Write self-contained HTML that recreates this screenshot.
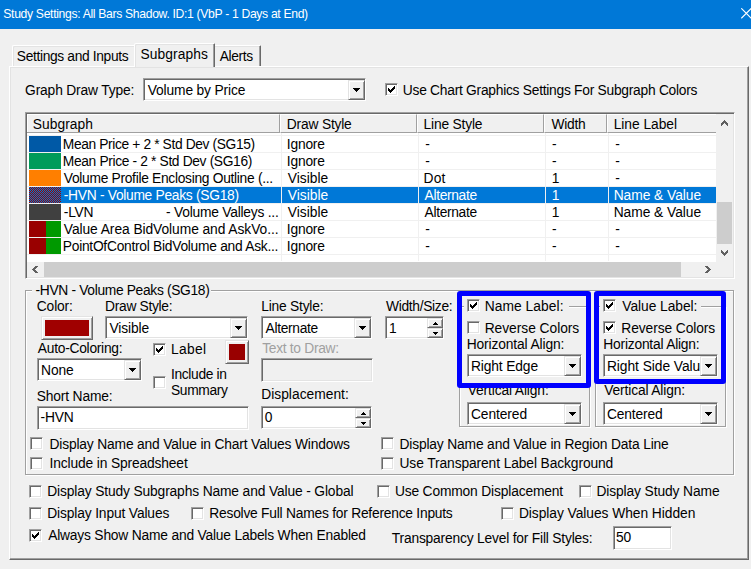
<!DOCTYPE html><html><head><meta charset="utf-8"><style>
html,body{margin:0;padding:0;}
body{width:751px;height:569px;position:relative;overflow:hidden;background:#F0F0F0;font-family:"Liberation Sans",sans-serif;}
.t{position:absolute;white-space:pre;font-size:13.8px;line-height:15px;color:#000;}
.sk{position:absolute;box-sizing:border-box;border:1px solid;border-color:#A0A0A0 #FFFFFF #FFFFFF #A0A0A0;box-shadow:inset 1px 1px 0 #696969, inset -1px -1px 0 #E3E3E3;}
.rs{position:absolute;box-sizing:border-box;border:1px solid;border-color:#E3E3E3 #696969 #696969 #E3E3E3;box-shadow:inset 1px 1px 0 #FFFFFF, inset -1px -1px 0 #A0A0A0;}
.et{position:absolute;box-sizing:border-box;border:1px solid;border-color:#A0A0A0 #FFFFFF #FFFFFF #A0A0A0;box-shadow:inset 1px 1px 0 #FFFFFF, inset -1px -1px 0 #A0A0A0;}
</style></head><body>

<div style="position:absolute;left:0px;top:0px;width:751px;height:29px;background:#0078D7;"></div>
<div class="t" style="left:3.30px;top:7.27px;letter-spacing:-0.334px;color:#fff;font-size:12.2px;">Study Settings: All Bars Shadow. ID:1 (VbP - 1 Days at End)</div>
<svg style="position:absolute;left:741px;top:8px" width="11" height="11"><path d="M0.3 0.3L10.3 10.3M10.3 0.3L0.3 10.3" stroke="#fff" stroke-width="1.1"/></svg>
<div style="position:absolute;left:9px;top:66px;width:740px;height:494px;box-sizing:border-box;border:1px solid;border-color:#FFFFFF #696969 #696969 #FFFFFF;box-shadow:inset -1px -1px 0 #A0A0A0, inset 1px 1px 0 #E3E3E3"></div>
<div style="position:absolute;left:12px;top:45px;width:122px;height:21px;box-sizing:border-box;border:1px solid;border-bottom:none;border-right:none;border-color:#FFFFFF transparent transparent #FFFFFF;border-top-left-radius:2px;box-shadow:inset 1px 1px 0 #E3E3E3"></div>
<div class="t" style="left:16.80px;top:48.72px;letter-spacing:-0.350px;">Settings and Inputs</div>
<div style="position:absolute;left:134px;top:43px;width:81px;height:24px;background:#F0F0F0;box-sizing:border-box;border:1px solid;border-bottom:none;border-color:#FFFFFF #696969 transparent #FFFFFF;box-shadow:inset -1px 0 0 #A0A0A0, inset 1px 1px 0 #E3E3E3;border-top-left-radius:2px;border-top-right-radius:1px"></div>
<div class="t" style="left:140.50px;top:46.72px;letter-spacing:0.075px;">Subgraphs</div>
<div style="position:absolute;left:215px;top:45px;width:46px;height:21px;box-sizing:border-box;border:1px solid;border-bottom:none;border-left:none;border-color:#FFFFFF #696969 transparent transparent;box-shadow:inset -1px 0 0 #A0A0A0, inset 0 1px 0 #E3E3E3;border-top-right-radius:1px"></div>
<div class="t" style="left:219.70px;top:48.72px;letter-spacing:-0.340px;">Alerts</div>
<div class="t" style="left:25.10px;top:82.72px;letter-spacing:-0.160px;">Graph Draw Type:</div>
<div class="sk" style="left:143px;top:78px;width:223px;height:23px;background:#fff"></div>
<div class="rs" style="left:348px;top:80px;width:17px;height:20px;background:#F0F0F0"></div>
<svg style="position:absolute;left:353px;top:88px" width="7" height="4" shape-rendering="crispEdges"><path fill="#000" d="M0 0h7v1h-1v1h-1v1h-1v1h-1v-1h-1v-1h-1v-1h-1z"/></svg>
<div class="t" style="left:147.80px;top:82.72px;letter-spacing:-0.150px;">Volume by Price</div>
<div class="sk" style="left:385px;top:83px;width:13px;height:13px;background:#fff"></div>
<svg style="position:absolute;left:388px;top:86px" width="7" height="7" shape-rendering="crispEdges"><path fill="#000" d="M6 0h1v3h-1v1h-1v1h-1v1h-1v1h-1v-1h-1v-1h-1v-3h1v1h1v1h1v-1h1v-1h1v-1h1z"/></svg>
<div class="t" style="left:402.80px;top:82.72px;letter-spacing:-0.263px;">Use Chart Graphics Settings For Subgraph Colors</div>
<div class="sk" style="left:25px;top:112px;width:710px;height:167px;background:#fff"></div>
<div style="position:absolute;left:27px;top:114px;width:253px;height:19px;box-sizing:border-box;background:#F0F0F0;border-left:1px solid #fff;border-right:1px solid #A0A0A0;border-bottom:1px solid #A0A0A0;border-top:1px solid #fff"></div>
<div class="t" style="left:32.80px;top:116.72px;letter-spacing:0.043px;">Subgraph</div>
<div style="position:absolute;left:280px;top:114px;width:137px;height:19px;box-sizing:border-box;background:#F0F0F0;border-left:1px solid #fff;border-right:1px solid #A0A0A0;border-bottom:1px solid #A0A0A0;border-top:1px solid #fff"></div>
<div class="t" style="left:286.80px;top:116.72px;letter-spacing:-0.189px;">Draw Style</div>
<div style="position:absolute;left:417px;top:114px;width:127px;height:19px;box-sizing:border-box;background:#F0F0F0;border-left:1px solid #fff;border-right:1px solid #A0A0A0;border-bottom:1px solid #A0A0A0;border-top:1px solid #fff"></div>
<div class="t" style="left:423.60px;top:116.72px;letter-spacing:-0.189px;">Line Style</div>
<div style="position:absolute;left:544px;top:114px;width:63px;height:19px;box-sizing:border-box;background:#F0F0F0;border-left:1px solid #fff;border-right:1px solid #A0A0A0;border-bottom:1px solid #A0A0A0;border-top:1px solid #fff"></div>
<div class="t" style="left:551.40px;top:116.72px;letter-spacing:-0.250px;">Width</div>
<div style="position:absolute;left:607px;top:114px;width:109px;height:19px;box-sizing:border-box;background:#F0F0F0;border-left:1px solid #fff;border-bottom:1px solid #A0A0A0;border-top:1px solid #fff"></div>
<div class="t" style="left:613.70px;top:116.72px;letter-spacing:-0.044px;">Line Label</div>
<div style="position:absolute;left:27px;top:132px;width:1px;height:1px;background:#A0A0A0;"></div>
<div style="position:absolute;left:27px;top:133px;width:689px;height:129px;background:#fff;"></div>
<div style="position:absolute;left:27px;top:135px;width:689px;height:1px;background:#F0F0F0;"></div>
<div style="position:absolute;left:27px;top:152px;width:689px;height:1px;background:#F0F0F0;"></div>
<div style="position:absolute;left:29px;top:136px;width:32px;height:16px;background:#0059A6;"></div>
<div class="t" style="left:62.80px;top:136.72px;letter-spacing:-0.377px;">Mean Price + 2 * Std Dev (SG15)</div>
<div class="t" style="left:286.80px;top:136.72px;letter-spacing:-0.200px;">Ignore</div>
<div class="t" style="left:425.30px;top:136.72px;letter-spacing:0.000px;">-</div>
<div class="t" style="left:551.90px;top:136.72px;letter-spacing:0.000px;">-</div>
<div class="t" style="left:615.30px;top:136.72px;letter-spacing:0.000px;">-</div>
<div style="position:absolute;left:27px;top:169px;width:689px;height:1px;background:#F0F0F0;"></div>
<div style="position:absolute;left:29px;top:153px;width:32px;height:16px;background:#009B5A;"></div>
<div class="t" style="left:62.80px;top:153.72px;letter-spacing:-0.353px;">Mean Price - 2 * Std Dev (SG16)</div>
<div class="t" style="left:286.80px;top:153.72px;letter-spacing:-0.200px;">Ignore</div>
<div class="t" style="left:425.30px;top:153.72px;letter-spacing:0.000px;">-</div>
<div class="t" style="left:551.90px;top:153.72px;letter-spacing:0.000px;">-</div>
<div class="t" style="left:615.30px;top:153.72px;letter-spacing:0.000px;">-</div>
<div style="position:absolute;left:27px;top:186px;width:689px;height:1px;background:#F0F0F0;"></div>
<div style="position:absolute;left:29px;top:170px;width:32px;height:16px;background:#FF7F00;"></div>
<div class="t" style="left:63.80px;top:170.72px;letter-spacing:-0.300px;">Volume Profile Enclosing Outline (...</div>
<div class="t" style="left:287.80px;top:170.72px;letter-spacing:0.000px;">Visible</div>
<div class="t" style="left:423.60px;top:170.72px;letter-spacing:0.150px;">Dot</div>
<div class="t" style="left:551.80px;top:170.72px;letter-spacing:0.000px;">1</div>
<div class="t" style="left:615.30px;top:170.72px;letter-spacing:0.000px;">-</div>
<div style="position:absolute;left:61px;top:187px;width:655px;height:16px;background:#0078D7;"></div>
<div style="position:absolute;left:27px;top:203px;width:689px;height:1px;background:#F0F0F0;"></div>
<div style="position:absolute;left:29px;top:187px;width:32px;height:16px;background:#990000;background-image:repeating-conic-gradient(#990000 0 25%,#0078D7 0 50%);background-size:2px 2px;"></div>
<div class="t" style="left:63.80px;top:187.72px;letter-spacing:-0.292px;color:#fff;">-HVN - Volume Peaks (SG18)</div>
<div class="t" style="left:287.80px;top:187.72px;letter-spacing:0.000px;color:#fff;">Visible</div>
<div class="t" style="left:424.60px;top:187.72px;letter-spacing:-0.338px;color:#fff;">Alternate</div>
<div class="t" style="left:551.80px;top:187.72px;letter-spacing:0.000px;color:#fff;">1</div>
<div class="t" style="left:613.70px;top:187.72px;letter-spacing:-0.045px;color:#fff;">Name &amp; Value</div>
<div style="position:absolute;left:27px;top:220px;width:689px;height:1px;background:#F0F0F0;"></div>
<div style="position:absolute;left:29px;top:204px;width:32px;height:16px;background:#404040;"></div>
<div class="t" style="left:63.80px;top:204.72px;letter-spacing:-0.233px;">-LVN</div>
<div class="t" style="left:166.00px;top:204.72px;letter-spacing:-0.226px;">- Volume Valleys ...</div>
<div class="t" style="left:287.80px;top:204.72px;letter-spacing:0.000px;">Visible</div>
<div class="t" style="left:424.60px;top:204.72px;letter-spacing:-0.338px;">Alternate</div>
<div class="t" style="left:551.80px;top:204.72px;letter-spacing:0.000px;">1</div>
<div class="t" style="left:613.70px;top:204.72px;letter-spacing:-0.045px;">Name &amp; Value</div>
<div style="position:absolute;left:27px;top:237px;width:689px;height:1px;background:#F0F0F0;"></div>
<div style="position:absolute;left:29px;top:221px;width:17px;height:16px;background:#990000;"></div>
<div style="position:absolute;left:46px;top:221px;width:15px;height:16px;background:#009900;"></div>
<div class="t" style="left:63.80px;top:221.72px;letter-spacing:-0.066px;">Value Area BidVolume and AskVo...</div>
<div class="t" style="left:286.80px;top:221.72px;letter-spacing:-0.200px;">Ignore</div>
<div class="t" style="left:425.30px;top:221.72px;letter-spacing:0.000px;">-</div>
<div class="t" style="left:551.90px;top:221.72px;letter-spacing:0.000px;">-</div>
<div class="t" style="left:615.30px;top:221.72px;letter-spacing:0.000px;">-</div>
<div style="position:absolute;left:27px;top:254px;width:689px;height:1px;background:#F0F0F0;"></div>
<div style="position:absolute;left:29px;top:238px;width:17px;height:16px;background:#990000;"></div>
<div style="position:absolute;left:46px;top:238px;width:15px;height:16px;background:#009900;"></div>
<div class="t" style="left:62.80px;top:238.72px;letter-spacing:-0.268px;">PointOfControl BidVolume and Ask...</div>
<div class="t" style="left:286.80px;top:238.72px;letter-spacing:-0.200px;">Ignore</div>
<div class="t" style="left:425.30px;top:238.72px;letter-spacing:0.000px;">-</div>
<div class="t" style="left:551.90px;top:238.72px;letter-spacing:0.000px;">-</div>
<div class="t" style="left:615.30px;top:238.72px;letter-spacing:0.000px;">-</div>
<div style="position:absolute;left:281px;top:133px;width:1px;height:128px;background:#F0F0F0;"></div>
<div style="position:absolute;left:418px;top:133px;width:1px;height:128px;background:#F0F0F0;"></div>
<div style="position:absolute;left:545px;top:133px;width:1px;height:128px;background:#F0F0F0;"></div>
<div style="position:absolute;left:608px;top:133px;width:1px;height:128px;background:#F0F0F0;"></div>
<div style="position:absolute;left:716px;top:114px;width:17px;height:148px;background:#F0F0F0;"></div>
<div style="position:absolute;left:717px;top:202px;width:15px;height:42px;background:#CDCDCD;"></div>
<svg style="position:absolute;left:721px;top:120px" width="7" height="6" shape-rendering="crispEdges"><path fill="#606060" d="M3 0h1v1h-1zM2 1h3v1h-3zM1 2h5v1h-5zM0 3h3v1h-3zM4 3h3v1h-3zM0 4h2v1h-2zM5 4h2v1h-2zM0 5h1v1h-1zM6 5h1v1h-1z"/></svg>
<svg style="position:absolute;left:721px;top:250px" width="7" height="6" shape-rendering="crispEdges"><path fill="#606060" d="M0 0h1v1h-1zM6 0h1v1h-1zM0 1h2v1h-2zM5 1h2v1h-2zM0 2h3v1h-3zM4 2h3v1h-3zM1 3h5v1h-5zM2 4h3v1h-3zM3 5h1v1h-1z"/></svg>
<div style="position:absolute;left:27px;top:262px;width:706px;height:15px;background:#F0F0F0;"></div>
<div style="position:absolute;left:44px;top:262px;width:637px;height:15px;background:#CDCDCD;"></div>
<svg style="position:absolute;left:32px;top:266px" width="6" height="7" shape-rendering="crispEdges"><path fill="#606060" d="M3 0h3v1h-3zM2 1h3v1h-3zM1 2h3v1h-3zM0 3h3v1h-3zM1 4h3v1h-3zM2 5h3v1h-3zM3 6h3v1h-3z"/></svg>
<svg style="position:absolute;left:705px;top:266px" width="6" height="7" shape-rendering="crispEdges"><path fill="#606060" d="M0 0h3v1h-3zM1 1h3v1h-3zM2 2h3v1h-3zM3 3h3v1h-3zM2 4h3v1h-3zM1 5h3v1h-3zM0 6h3v1h-3z"/></svg>
<div style="position:absolute;box-sizing:border-box;border:1px solid #FFFFFF;left:26px;top:291px;width:709px;height:185px"></div>
<div style="position:absolute;box-sizing:border-box;border:1px solid #A0A0A0;left:25px;top:290px;width:709px;height:185px"></div>
<div style="position:absolute;left:32px;top:282px;width:179px;height:16px;background:#F0F0F0;"></div>
<div class="t" style="left:35.50px;top:282.72px;letter-spacing:-0.328px;">-HVN - Volume Peaks (SG18)</div>
<div class="t" style="left:36.80px;top:298.72px;letter-spacing:-0.140px;">Color:</div>
<div class="rs" style="left:41px;top:316px;width:52px;height:24px;background:#F0F0F0"></div>
<div style="position:absolute;left:45px;top:320px;width:44px;height:16px;background:#A00000;"></div>
<div class="t" style="left:105.10px;top:298.72px;letter-spacing:-0.310px;">Draw Style:</div>
<div class="sk" style="left:105px;top:316px;width:143px;height:23px;background:#fff"></div>
<div class="rs" style="left:230px;top:318px;width:17px;height:20px;background:#F0F0F0"></div>
<svg style="position:absolute;left:235px;top:326px" width="7" height="4" shape-rendering="crispEdges"><path fill="#000" d="M0 0h7v1h-1v1h-1v1h-1v1h-1v-1h-1v-1h-1v-1h-1z"/></svg>
<div class="t" style="left:109.50px;top:320.72px;letter-spacing:-0.117px;">Visible</div>
<div class="t" style="left:261.20px;top:298.72px;letter-spacing:-0.210px;">Line Style:</div>
<div class="sk" style="left:261px;top:316px;width:111px;height:23px;background:#fff"></div>
<div class="rs" style="left:354px;top:318px;width:17px;height:20px;background:#F0F0F0"></div>
<svg style="position:absolute;left:359px;top:326px" width="7" height="4" shape-rendering="crispEdges"><path fill="#000" d="M0 0h7v1h-1v1h-1v1h-1v1h-1v-1h-1v-1h-1v-1h-1z"/></svg>
<div class="t" style="left:265.50px;top:320.72px;letter-spacing:-0.312px;">Alternate</div>
<div class="t" style="left:386.00px;top:298.72px;letter-spacing:-0.320px;">Width/Size:</div>
<div class="sk" style="left:385px;top:316px;width:59px;height:23px;background:#fff"></div>
<div class="rs" style="left:427px;top:318px;width:16px;height:10px;background:#F0F0F0"></div>
<div class="rs" style="left:427px;top:328px;width:16px;height:10px;background:#F0F0F0"></div>
<svg style="position:absolute;left:433px;top:322px" width="5" height="3" shape-rendering="crispEdges"><path fill="#000" d="M2 0h1v1h1v1h1v1h-5v-1h1v-1h1z"/></svg>
<svg style="position:absolute;left:433px;top:332px" width="5" height="3" shape-rendering="crispEdges"><path fill="#000" d="M0 0h5v1h-1v1h-1v1h-1v-1h-1v-1h-1z"/></svg>
<div class="t" style="left:389.00px;top:320.72px;letter-spacing:0.000px;">1</div>
<div class="t" style="left:37.80px;top:340.72px;letter-spacing:-0.262px;">Auto-Coloring:</div>
<div class="sk" style="left:37px;top:358px;width:105px;height:23px;background:#fff"></div>
<div class="rs" style="left:124px;top:360px;width:17px;height:20px;background:#F0F0F0"></div>
<svg style="position:absolute;left:129px;top:368px" width="7" height="4" shape-rendering="crispEdges"><path fill="#000" d="M0 0h7v1h-1v1h-1v1h-1v1h-1v-1h-1v-1h-1v-1h-1z"/></svg>
<div class="t" style="left:41.10px;top:362.72px;letter-spacing:-0.100px;">None</div>
<div class="sk" style="left:153px;top:343px;width:13px;height:13px;background:#fff"></div>
<svg style="position:absolute;left:156px;top:346px" width="7" height="7" shape-rendering="crispEdges"><path fill="#000" d="M6 0h1v3h-1v1h-1v1h-1v1h-1v1h-1v-1h-1v-1h-1v-3h1v1h1v1h1v-1h1v-1h1v-1h1z"/></svg>
<div class="t" style="left:171.00px;top:341.72px;letter-spacing:0.325px;">Label</div>
<div class="rs" style="left:225px;top:340px;width:24px;height:24px;background:#F0F0F0"></div>
<div style="position:absolute;left:229px;top:344px;width:16px;height:16px;background:#990000;"></div>
<div class="sk" style="left:153px;top:376px;width:13px;height:13px;background:#fff"></div>
<div class="t" style="left:171.00px;top:366.72px;letter-spacing:-0.344px;">Include in</div>
<div class="t" style="left:171.00px;top:382.72px;letter-spacing:-0.350px;">Summary</div>
<div class="t" style="left:262.20px;top:340.72px;letter-spacing:-0.300px;color:#A0A0A0;">Text to Draw:</div>
<div class="sk" style="left:261px;top:358px;width:112px;height:24px;background:#F0F0F0"></div>
<div class="t" style="left:36.80px;top:388.72px;letter-spacing:-0.170px;">Short Name:</div>
<div class="sk" style="left:37px;top:406px;width:212px;height:24px;background:#fff"></div>
<div class="t" style="left:40.50px;top:409.72px;letter-spacing:-0.133px;">-HVN</div>
<div class="t" style="left:261.20px;top:386.72px;letter-spacing:0.017px;">Displacement:</div>
<div class="sk" style="left:261px;top:406px;width:111px;height:23px;background:#fff"></div>
<div class="rs" style="left:355px;top:408px;width:16px;height:10px;background:#F0F0F0"></div>
<div class="rs" style="left:355px;top:418px;width:16px;height:10px;background:#F0F0F0"></div>
<svg style="position:absolute;left:361px;top:412px" width="5" height="3" shape-rendering="crispEdges"><path fill="#000" d="M2 0h1v1h1v1h1v1h-5v-1h1v-1h1z"/></svg>
<svg style="position:absolute;left:361px;top:422px" width="5" height="3" shape-rendering="crispEdges"><path fill="#000" d="M0 0h5v1h-1v1h-1v1h-1v-1h-1v-1h-1z"/></svg>
<div class="t" style="left:264.80px;top:409.72px;letter-spacing:0.000px;">0</div>
<div style="position:absolute;box-sizing:border-box;border:1px solid #FFFFFF;left:460px;top:307px;width:131px;height:121px"></div>
<div style="position:absolute;box-sizing:border-box;border:1px solid #A0A0A0;left:459px;top:306px;width:131px;height:121px"></div>
<div style="position:absolute;left:464px;top:298px;width:105px;height:16px;background:#F0F0F0;"></div>
<div class="sk" style="left:467px;top:299px;width:13px;height:13px;background:#fff"></div>
<svg style="position:absolute;left:470px;top:302px" width="7" height="7" shape-rendering="crispEdges"><path fill="#000" d="M6 0h1v3h-1v1h-1v1h-1v1h-1v1h-1v-1h-1v-1h-1v-3h1v1h1v1h1v-1h1v-1h1v-1h1z"/></svg>
<div class="t" style="left:484.70px;top:298.72px;letter-spacing:0.060px;">Name Label:</div>
<div class="sk" style="left:467px;top:321px;width:13px;height:13px;background:#fff"></div>
<div class="t" style="left:484.70px;top:320.72px;letter-spacing:-0.038px;">Reverse Colors</div>
<div class="t" style="left:466.70px;top:336.72px;letter-spacing:-0.125px;">Horizontal Align:</div>
<div class="sk" style="left:467px;top:354px;width:115px;height:23px;background:#fff"></div>
<div class="rs" style="left:564px;top:356px;width:17px;height:20px;background:#F0F0F0"></div>
<svg style="position:absolute;left:569px;top:364px" width="7" height="4" shape-rendering="crispEdges"><path fill="#000" d="M0 0h7v1h-1v1h-1v1h-1v1h-1v-1h-1v-1h-1v-1h-1z"/></svg>
<div class="t" style="left:471.00px;top:358.72px;letter-spacing:-0.133px;">Right Edge</div>
<div class="t" style="left:467.70px;top:382.72px;letter-spacing:-0.129px;">Vertical Align:</div>
<div class="sk" style="left:467px;top:402px;width:115px;height:23px;background:#fff"></div>
<div class="rs" style="left:564px;top:404px;width:17px;height:20px;background:#F0F0F0"></div>
<svg style="position:absolute;left:569px;top:412px" width="7" height="4" shape-rendering="crispEdges"><path fill="#000" d="M0 0h7v1h-1v1h-1v1h-1v1h-1v-1h-1v-1h-1v-1h-1z"/></svg>
<div class="t" style="left:471.00px;top:406.72px;letter-spacing:-0.100px;">Centered</div>
<div style="position:absolute;box-sizing:border-box;border:1px solid #FFFFFF;left:596px;top:307px;width:131px;height:121px"></div>
<div style="position:absolute;box-sizing:border-box;border:1px solid #A0A0A0;left:595px;top:306px;width:131px;height:121px"></div>
<div style="position:absolute;left:600px;top:298px;width:101px;height:16px;background:#F0F0F0;"></div>
<div class="sk" style="left:603px;top:299px;width:13px;height:13px;background:#fff"></div>
<svg style="position:absolute;left:606px;top:302px" width="7" height="7" shape-rendering="crispEdges"><path fill="#000" d="M6 0h1v3h-1v1h-1v1h-1v1h-1v1h-1v-1h-1v-1h-1v-3h1v1h1v1h1v-1h1v-1h1v-1h1z"/></svg>
<div class="t" style="left:622.30px;top:298.72px;letter-spacing:-0.055px;">Value Label:</div>
<div class="sk" style="left:603px;top:321px;width:13px;height:13px;background:#fff"></div>
<svg style="position:absolute;left:606px;top:324px" width="7" height="7" shape-rendering="crispEdges"><path fill="#000" d="M6 0h1v3h-1v1h-1v1h-1v1h-1v1h-1v-1h-1v-1h-1v-3h1v1h1v1h1v-1h1v-1h1v-1h1z"/></svg>
<div class="t" style="left:621.30px;top:320.72px;letter-spacing:-0.092px;">Reverse Colors</div>
<div class="t" style="left:603.30px;top:336.72px;letter-spacing:-0.213px;">Horizontal Align:</div>
<div class="sk" style="left:603px;top:354px;width:115px;height:23px;background:#fff"></div>
<div class="rs" style="left:700px;top:356px;width:17px;height:20px;background:#F0F0F0"></div>
<svg style="position:absolute;left:705px;top:364px" width="7" height="4" shape-rendering="crispEdges"><path fill="#000" d="M0 0h7v1h-1v1h-1v1h-1v1h-1v-1h-1v-1h-1v-1h-1z"/></svg>
<div class="t" style="left:606.90px;top:358.72px;letter-spacing:-0.050px;">Right Side Valu</div>
<div class="t" style="left:604.30px;top:382.72px;letter-spacing:-0.150px;">Vertical Align:</div>
<div class="sk" style="left:603px;top:402px;width:115px;height:23px;background:#fff"></div>
<div class="rs" style="left:700px;top:404px;width:17px;height:20px;background:#F0F0F0"></div>
<svg style="position:absolute;left:705px;top:412px" width="7" height="4" shape-rendering="crispEdges"><path fill="#000" d="M0 0h7v1h-1v1h-1v1h-1v1h-1v-1h-1v-1h-1v-1h-1z"/></svg>
<div class="t" style="left:606.90px;top:406.72px;letter-spacing:-0.143px;">Centered</div>
<div style="position:absolute;left:457px;top:291px;width:134px;height:97px;box-sizing:border-box;border:5px solid #0000FF;border-radius:3px"></div>
<div style="position:absolute;left:594px;top:291px;width:132px;height:93px;box-sizing:border-box;border:5px solid #0000FF;border-radius:3px"></div>
<div class="sk" style="left:30px;top:437px;width:13px;height:13px;background:#fff"></div>
<div class="t" style="left:49.50px;top:436.72px;letter-spacing:-0.162px;">Display Name and Value in Chart Values Windows</div>
<div class="sk" style="left:30px;top:457px;width:13px;height:13px;background:#fff"></div>
<div class="t" style="left:49.50px;top:455.72px;letter-spacing:-0.138px;">Include in Spreadsheet</div>
<div class="sk" style="left:381px;top:437px;width:13px;height:13px;background:#fff"></div>
<div class="t" style="left:399.50px;top:436.72px;letter-spacing:-0.161px;">Display Name and Value in Region Data Line</div>
<div class="sk" style="left:381px;top:457px;width:13px;height:13px;background:#fff"></div>
<div class="t" style="left:399.50px;top:455.72px;letter-spacing:-0.106px;">Use Transparent Label Background</div>
<div class="sk" style="left:29px;top:485px;width:13px;height:13px;background:#fff"></div>
<div class="t" style="left:47.20px;top:483.72px;letter-spacing:-0.137px;">Display Study Subgraphs Name and Value - Global</div>
<div class="sk" style="left:377px;top:485px;width:13px;height:13px;background:#fff"></div>
<div class="t" style="left:394.90px;top:483.72px;letter-spacing:-0.159px;">Use Common Displacement</div>
<div class="sk" style="left:579px;top:485px;width:13px;height:13px;background:#fff"></div>
<div class="t" style="left:596.40px;top:483.72px;letter-spacing:-0.106px;">Display Study Name</div>
<div class="sk" style="left:29px;top:507px;width:13px;height:13px;background:#fff"></div>
<div class="t" style="left:47.20px;top:505.72px;letter-spacing:-0.137px;">Display Input Values</div>
<div class="sk" style="left:191px;top:507px;width:13px;height:13px;background:#fff"></div>
<div class="t" style="left:209.30px;top:505.72px;letter-spacing:-0.232px;">Resolve Full Names for Reference Inputs</div>
<div class="sk" style="left:501px;top:507px;width:13px;height:13px;background:#fff"></div>
<div class="t" style="left:518.90px;top:505.72px;letter-spacing:-0.048px;">Display Values When Hidden</div>
<div class="sk" style="left:29px;top:529px;width:13px;height:13px;background:#fff"></div>
<svg style="position:absolute;left:32px;top:532px" width="7" height="7" shape-rendering="crispEdges"><path fill="#000" d="M6 0h1v3h-1v1h-1v1h-1v1h-1v1h-1v-1h-1v-1h-1v-3h1v1h1v1h1v-1h1v-1h1v-1h1z"/></svg>
<div class="t" style="left:48.20px;top:527.72px;letter-spacing:-0.193px;">Always Show Name and Value Labels When Enabled</div>
<div class="t" style="left:391.80px;top:530.72px;letter-spacing:-0.191px;">Transparency Level for Fill Styles:</div>
<div class="sk" style="left:613px;top:526px;width:59px;height:24px;background:#fff"></div>
<div class="t" style="left:616.00px;top:529.72px;letter-spacing:-0.280px;">50</div>
</body></html>
